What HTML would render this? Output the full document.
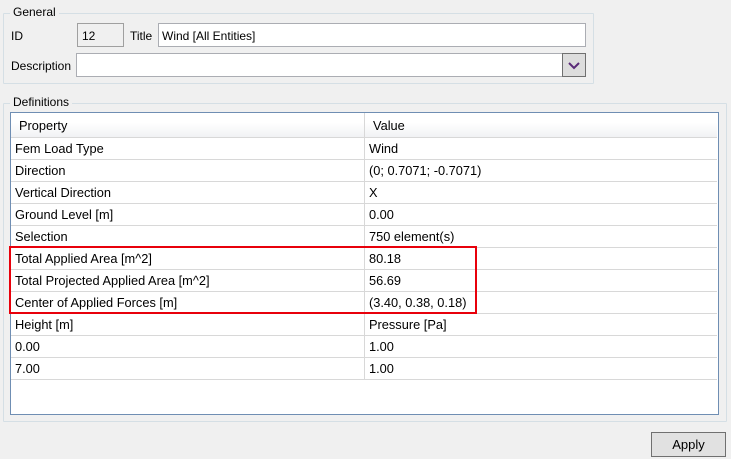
<!DOCTYPE html>
<html><head><style>
*{box-sizing:border-box;margin:0;padding:0}
body{width:731px;height:459px;background:#f0f0f0;font-family:"Liberation Sans",sans-serif;font-size:12px;color:#000;position:relative;overflow:hidden}
.a{position:absolute}
.gb{position:absolute;border:1px solid #d5dfe5;border-radius:1px}
.lg{position:absolute;background:#f0f0f0;padding:0 3px}
.inp{position:absolute;background:#fff;border:1px solid #abadb3;padding:5px 3px 3px;line-height:14px}
.row{position:absolute;left:0;width:706px;height:22px;border-bottom:1px solid #d8d8d8;font-size:12.8px}
.row span{position:absolute;top:3px}
.c1{left:4px}.c2{left:358px}
</style></head><body>
<div class="gb" style="left:3px;top:13px;width:591px;height:71px"></div>
<div class="lg" style="left:10px;top:5px">General</div>
<div class="a" style="left:11px;top:29px">ID</div>
<div class="a" style="left:77px;top:23px;width:47px;height:24px;background:#f0f0f0;border:1px solid #a0a0a0;padding:5px 4px">12</div>
<div class="a" style="left:130px;top:29px">Title</div>
<div class="inp" style="left:158px;top:23px;width:428px;height:24px">Wind [All Entities]</div>
<div class="a" style="left:11px;top:59px">Description</div>
<div class="inp" style="left:76px;top:53px;width:487px;height:24px"></div>
<div class="a" style="left:562px;top:53px;width:24px;height:24px;background:#ddd;border:1px solid #707070">
<svg width="22" height="22" style="position:absolute;left:0;top:0"><path d="M6 9 L11 14 L16 9" stroke="#5a2a78" stroke-width="2" fill="none"/></svg></div>
<div class="gb" style="left:3px;top:103px;width:724px;height:319px"></div>
<div class="lg" style="left:10px;top:95px">Definitions</div>
<div class="a" style="left:10px;top:112px;width:709px;height:303px;background:#fff;border:1px solid #6f8eb3">
<div class="row" style="top:0;height:25px;background:linear-gradient(#fff,#fff 40%,#f1f2f4)"><span class="c1" style="top:5px;left:8px">Property</span><span class="c2" style="top:5px;left:362px">Value</span></div>
<div class="a" style="left:353px;top:0;width:1px;height:267px;background:#d8d8d8"></div>
<div class="row" style="top:25px"><span class="c1">Fem Load Type</span><span class="c2">Wind</span></div>
<div class="row" style="top:47px"><span class="c1">Direction</span><span class="c2">(0; 0.7071; -0.7071)</span></div>
<div class="row" style="top:69px"><span class="c1">Vertical Direction</span><span class="c2">X</span></div>
<div class="row" style="top:91px"><span class="c1">Ground Level [m]</span><span class="c2">0.00</span></div>
<div class="row" style="top:113px"><span class="c1">Selection</span><span class="c2">750 element(s)</span></div>
<div class="row" style="top:135px"><span class="c1">Total Applied Area [m^2]</span><span class="c2">80.18</span></div>
<div class="row" style="top:157px"><span class="c1">Total Projected Applied Area [m^2]</span><span class="c2">56.69</span></div>
<div class="row" style="top:179px"><span class="c1">Center of Applied Forces [m]</span><span class="c2">(3.40, 0.38, 0.18)</span></div>
<div class="row" style="top:201px"><span class="c1">Height [m]</span><span class="c2">Pressure [Pa]</span></div>
<div class="row" style="top:223px"><span class="c1">0.00</span><span class="c2">1.00</span></div>
<div class="row" style="top:245px"><span class="c1">7.00</span><span class="c2">1.00</span></div>
</div>
<div class="a" style="left:9px;top:246px;width:468px;height:68px;border:2px solid #e8000b"></div>
<div class="a" style="left:651px;top:432px;width:75px;height:25px;background:#e1e1e1;border:1px solid #707070;text-align:center;line-height:23px;font-size:13px">Apply</div>
</body></html>
